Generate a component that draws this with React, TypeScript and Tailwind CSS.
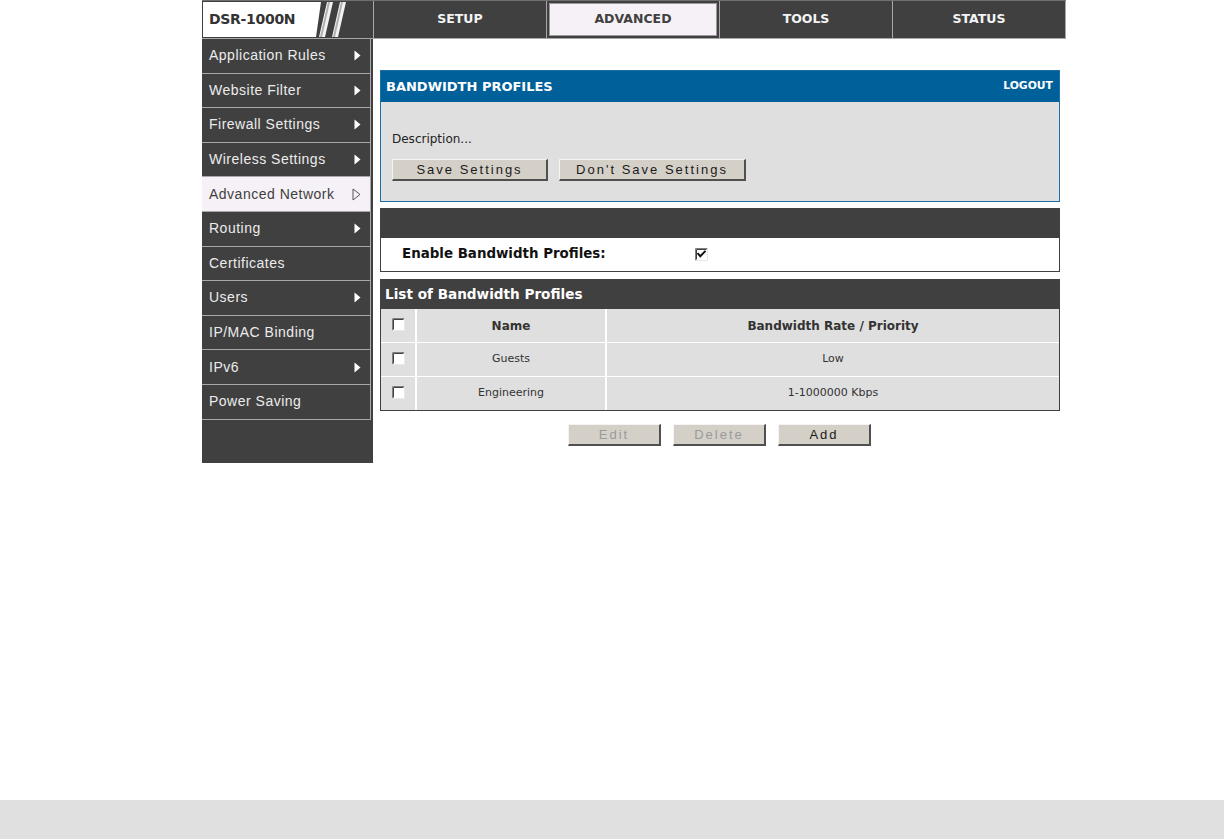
import React from "react";

const sideItems: { label: string; arrow: boolean; active?: boolean }[] = [
  { label: "Application Rules", arrow: true },
  { label: "Website Filter", arrow: true },
  { label: "Firewall Settings", arrow: true },
  { label: "Wireless Settings", arrow: true },
  { label: "Advanced Network", arrow: true, active: true },
  { label: "Routing", arrow: true },
  { label: "Certificates", arrow: false },
  { label: "Users", arrow: true },
  { label: "IP/MAC Binding", arrow: false },
  { label: "IPv6", arrow: true },
  { label: "Power Saving", arrow: false },
];

function Arrow({ outline }: { outline?: boolean }) {
  return outline ? (
    <svg width="9" height="13" viewBox="0 0 9 13">
      <path d="M1 1 L8 6.5 L1 12 Z" fill="none" stroke="#555" strokeWidth="1" />
    </svg>
  ) : (
    <svg width="7" height="11" viewBox="0 0 7 11">
      <path d="M0.5 0.5 L6.5 5.5 L0.5 10.5 Z" fill="#ffffff" />
    </svg>
  );
}

function CheckBox({ checked }: { checked?: boolean }) {
  return (
    <svg width="13" height="13" viewBox="0 0 13 13">
      <rect x="0" y="0" width="13" height="13" fill="#ffffff" />
      <path d="M0.5 12.5 V0.5 H12.5" fill="none" stroke="#808080" strokeWidth="1" />
      <path d="M1.5 11.5 V1.5 H11.5" fill="none" stroke="#404040" strokeWidth="1" />
      <path d="M0.5 12.5 H12.5 V0.5" fill="none" stroke="#e8e8e8" strokeWidth="1" />
      {checked && (
        <path d="M3.2 5.8 L5.3 8.2 L9.8 3.6" fill="none" stroke="#111" strokeWidth="2" strokeLinecap="square" />
      )}
    </svg>
  );
}

function Btn({ label, w, disabled }: { label: string; w: string; disabled?: boolean }) {
  return (
    <div
      className={`${w} h-[22px] flex items-center justify-center bg-[#d4d0c8] border-t border-l border-t-[#f4f4f4] border-l-[#f4f4f4] border-b-2 border-r-2 border-b-[#505050] border-r-[#505050] text-[13px] tracking-[2px] ${
        disabled ? "text-[#999]" : "text-[#1a1a1a]"
      }`}
      style={{ fontFamily: '"Liberation Sans", Arial, sans-serif' }}
    >
      {label}
    </div>
  );
}

export default function App() {
  const dv = { fontFamily: '"DejaVu Sans", Verdana, sans-serif' };
  return (
    <div className="w-[1224px] h-[839px] bg-white flex flex-col" style={dv}>
      <div className="flex-1">
        <div className="ml-[202px] w-[864px]">
          {/* Top nav */}
          <div className="flex h-[39px] bg-[#404040] border-t border-t-[#707070] border-b border-b-[#a8a8a8]">
            <div className="w-[171px] relative flex items-center">
              <svg width="171" height="37" viewBox="0 0 171 37" className="absolute left-0 top-0">
                <path d="M1 1 H119 L114 36 H1 Z" fill="#ffffff" />
                <path d="M125 1 H131 L123 36 H117 Z" fill="#f2f2f2" />
                <path d="M126 1 H128 L120 36 H118 Z" fill="#b0b0b0" />
                <path d="M138 1 H144 L136 36 H130 Z" fill="#f2f2f2" />
                <path d="M139 1 H141 L133 36 H131 Z" fill="#b0b0b0" />
              </svg>
              <span className="relative ml-[7px] text-[14px] font-bold text-[#333] tracking-[-0.3px]">DSR-1000N</span>
            </div>
            {["SETUP", "ADVANCED", "TOOLS", "STATUS"].map((t) => (
              <div key={t} className="flex-1 border-l border-l-[#a8a8a8] last:border-r last:border-r-[#a8a8a8] p-[2px]">
                {t === "ADVANCED" ? (
                  <div className="h-full bg-[#f6f1f6] border border-[#9a9a9a] flex items-center justify-center text-[12.5px] font-bold text-[#404040]">
                    {t}
                  </div>
                ) : (
                  <div className="h-full flex items-center justify-center text-[12.5px] font-bold text-[#f4f4f4]">
                    {t}
                  </div>
                )}
              </div>
            ))}
          </div>

          <div className="flex">
            {/* Sidebar */}
            <div className="w-[171px] h-[424px] bg-[#404040] pr-[2px]">
              {sideItems.map((it) => (
                <div
                  key={it.label}
                  className={`h-[34.6px] flex items-center justify-between pl-[7px] pr-[9px] border-b border-r border-[#a8a8a8] text-[14px] tracking-[0.5px] ${
                    it.active ? "bg-[#f6f1f6] text-[#404040]" : "text-[#ececec]"
                  }`}
                  style={{ fontFamily: '"Liberation Sans", Arial, sans-serif' }}
                >
                  <span>{it.label}</span>
                  {it.arrow && <Arrow outline={it.active} />}
                </div>
              ))}
            </div>

            {/* Main */}
            <div className="flex-1 pl-[7px] pr-[6px] pt-[31px]">
              {/* Panel 1 */}
              <div className="border border-[#1d6ea3]">
                <div className="h-[31px] bg-[#00609a] flex items-center justify-between pl-[5px] pr-[6px]">
                  <span className="text-[13px] font-bold text-white">BANDWIDTH PROFILES</span>
                  <span className="text-[10.8px] font-bold text-white">LOGOUT</span>
                </div>
                <div className="h-[99px] bg-[#dfdfdf] pl-[11px] pt-[28px]">
                  <div className="text-[12px] text-[#222] leading-[18px]">Description...</div>
                  <div className="flex gap-[11px] mt-[11px]">
                    <Btn label="Save Settings" w="w-[156px]" />
                    <Btn label="Don't Save Settings" w="w-[187px]" />
                  </div>
                </div>
              </div>

              {/* Panel 2 */}
              <div className="mt-[6px]">
                <div className="h-[30px] bg-[#404040]" />
                <div className="h-[34px] bg-white border border-[#404040] border-t-0 flex items-center">
                  <span className="w-[314px] pl-[21px] text-[13.4px] font-bold text-[#111]">Enable Bandwidth Profiles:</span>
                  <CheckBox checked />
                </div>
              </div>

              {/* Panel 3 */}
              <div className="mt-[7px]">
                <div className="h-[30px] bg-[#404040] flex items-center pl-[5px]">
                  <span className="text-[13.6px] font-bold text-white">List of Bandwidth Profiles</span>
                </div>
                <div className="border border-[#404040] border-t-0 bg-white">
                  {[
                    { n: "Name", r: "Bandwidth Rate / Priority", h: true },
                    { n: "Guests", r: "Low" },
                    { n: "Engineering", r: "1-1000000 Kbps" },
                  ].map((row, i) => (
                    <div key={i} className={`flex h-[33px] ${i > 0 ? "mt-[1px]" : ""}`}>
                      <div className="w-[34px] bg-[#dfdfdf] flex items-start justify-center pt-[9px] mr-[2px]">
                        <CheckBox />
                      </div>
                      <div
                        className={`w-[188px] bg-[#dfdfdf] flex items-center justify-center mr-[2px] ${
                          row.h ? "text-[12px] font-bold text-[#333]" : "text-[11px] text-[#333]"
                        }`}
                      >
                        {row.n}
                      </div>
                      <div
                        className={`flex-1 bg-[#dfdfdf] flex items-center justify-center ${
                          row.h ? "text-[12px] font-bold text-[#333]" : "text-[11px] text-[#333]"
                        }`}
                      >
                        {row.r}
                      </div>
                    </div>
                  ))}
                </div>
              </div>

              <div className="flex justify-center gap-[12px] mt-[13px] ml-[-7px] mr-[-6px]">
                <Btn label="Edit" w="w-[93px]" disabled />
                <Btn label="Delete" w="w-[93px]" disabled />
                <Btn label="Add" w="w-[93px]" />
              </div>
            </div>
          </div>
        </div>
      </div>
      <div className="h-[39px] bg-[#e0e0e0]" />
    </div>
  );
}
